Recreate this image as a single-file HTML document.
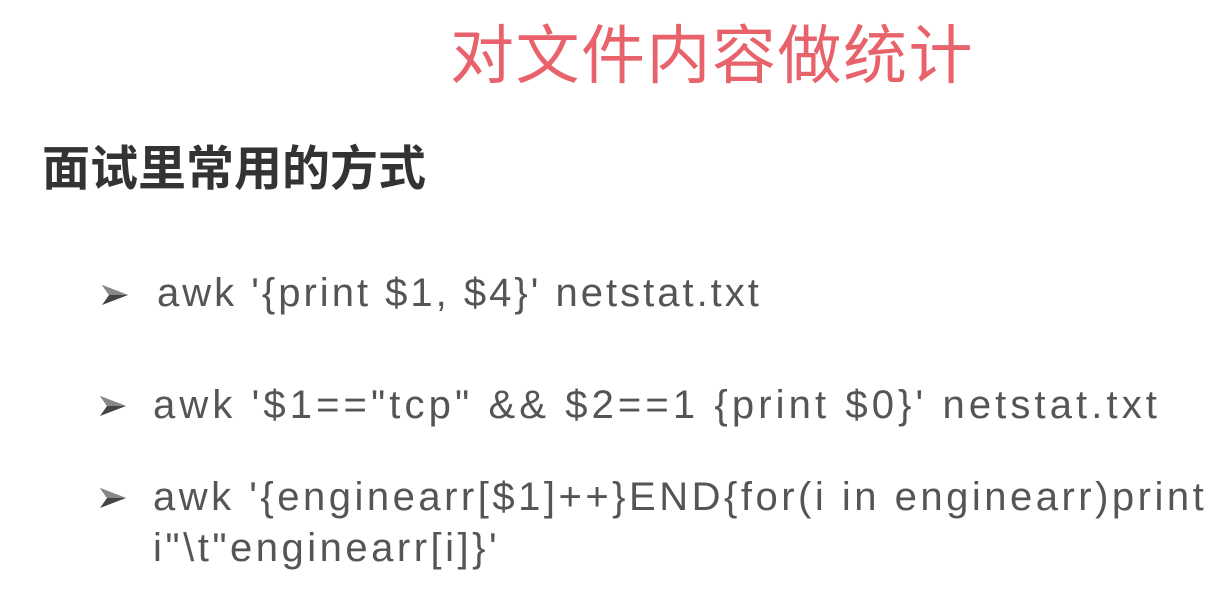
<!DOCTYPE html>
<html><head><meta charset="utf-8"><style>
body{margin:0;width:1225px;height:612px;background:#fff;overflow:hidden;position:relative;font-family:"Liberation Sans","Noto Sans CJK SC",sans-serif}
.t{position:absolute;left:450px;top:16px;font-size:64px;color:#e8626b;letter-spacing:1.5px;white-space:nowrap;line-height:80px}
.s{position:absolute;left:42px;top:140px;font-size:48px;font-weight:bold;color:#333;line-height:60px;white-space:nowrap}
.l{position:absolute;font-size:40px;color:#555;white-space:nowrap;line-height:50px;letter-spacing:3.5px}
.a{position:absolute;width:30px;height:24px}
</style></head><body>
<div class="t">对文件内容做统计</div>
<div class="s">面试里常用的方式</div>
<svg class="a" style="left:100px;top:283px" viewBox="0 0 30 24"><path d="M2 2 L28 12 L2 22 L9 12 Z" fill="#444"/><path d="M2 2 L28 12 L9 12 Z" fill="#888"/></svg>
<div class="l" style="left:157px;top:268px;letter-spacing:3px">awk '{print $1, $4}' netstat.txt</div>
<svg class="a" style="left:98px;top:394px" viewBox="0 0 30 24"><path d="M2 2 L28 12 L2 22 L9 12 Z" fill="#444"/><path d="M2 2 L28 12 L9 12 Z" fill="#888"/></svg>
<div class="l" style="left:153px;top:380px;letter-spacing:4.1px">awk '$1=="tcp" &amp;&amp; $2==1 {print $0}' netstat.txt</div>
<svg class="a" style="left:98px;top:486px" viewBox="0 0 30 24"><path d="M2 2 L28 12 L2 22 L9 12 Z" fill="#444"/><path d="M2 2 L28 12 L9 12 Z" fill="#888"/></svg>
<div class="l" style="left:153px;top:472px">awk '{enginearr[$1]++}END{for(i in enginearr)print</div>
<div class="l" style="left:153px;top:523px">i"\t"enginearr[i]}'</div>
</body></html>
